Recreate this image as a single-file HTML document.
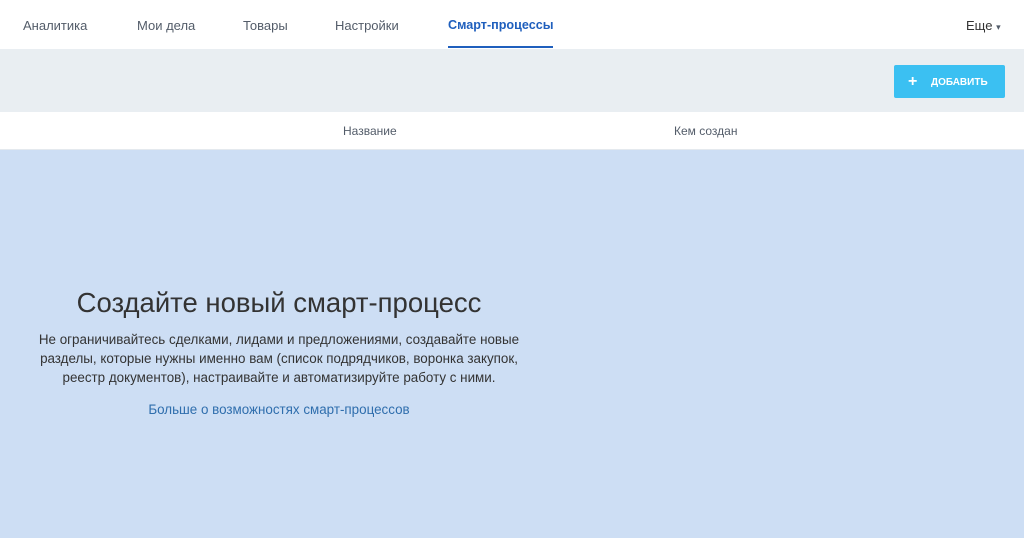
<!DOCTYPE html>
<html><head><meta charset="utf-8"><style>
body{margin:0;width:1024px;height:538px;overflow:hidden;font-family:"Liberation Sans",sans-serif;background:#fff;position:relative}
.nav{height:49px;position:relative;background:#fff}
.nav span{position:absolute;top:18px;font-size:13px;color:#535c69}
.nav .act{font-weight:bold;color:#1f5fbd;font-size:12.6px}
.ul{position:absolute;left:448px;top:46px;width:105px;height:2px;background:#1f5fbd}
.bar{position:absolute;top:49px;left:0;width:1024px;height:63px;background:#e9eef2}
.btn{position:absolute;left:894px;top:65px;width:111px;height:33px;background:#3bc0f2;border-radius:2px;color:#fff;font-size:10px;font-weight:bold;line-height:33px}
.hd{position:absolute;top:112px;left:0;width:1024px;height:37px;background:#fff;border-bottom:1px solid #e4e9ee;font-size:12px;color:#535c69}
.main{position:absolute;top:150px;left:0;width:1024px;height:388px;background:#cddef4}
h1{position:absolute;top:287px;left:0;width:558px;text-align:center;margin:0;font-weight:normal;font-size:27.5px;color:#333}
p{position:absolute;top:330px;left:0;width:558px;text-align:center;margin:0;font-size:13.4px;line-height:19px;color:#333}
a{position:absolute;top:402px;left:0;width:558px;text-align:center;font-size:13.4px;color:#2f6ead;text-decoration:none}
</style></head><body>
<div class="nav">
<span style="left:23px">Аналитика</span>
<span style="left:137px">Мои дела</span>
<span style="left:243px">Товары</span>
<span style="left:335px">Настройки</span>
<span class="act" style="left:448px">Смарт-процессы</span>
<span style="left:966px;color:#333">Еще <span style="position:static;font-size:9px">▾</span></span>
<div class="ul"></div>
</div>
<div class="bar"></div>
<div class="btn"><span style="position:absolute;left:14px;font-size:16px">+</span><span style="position:absolute;left:37px;top:1px">ДОБАВИТЬ</span></div>
<div class="hd"><span style="position:absolute;left:343px;top:12px">Название</span><span style="position:absolute;left:674px;top:12px">Кем создан</span></div>
<div class="main"></div>
<h1>Создайте новый смарт-процесс</h1>
<p>Не ограничивайтесь сделками, лидами и предложениями, создавайте новые<br>разделы, которые нужны именно вам (список подрядчиков, воронка закупок,<br>реестр документов), настраивайте и автоматизируйте работу с ними.</p>
<a>Больше о возможностях смарт-процессов</a>
</body></html>
